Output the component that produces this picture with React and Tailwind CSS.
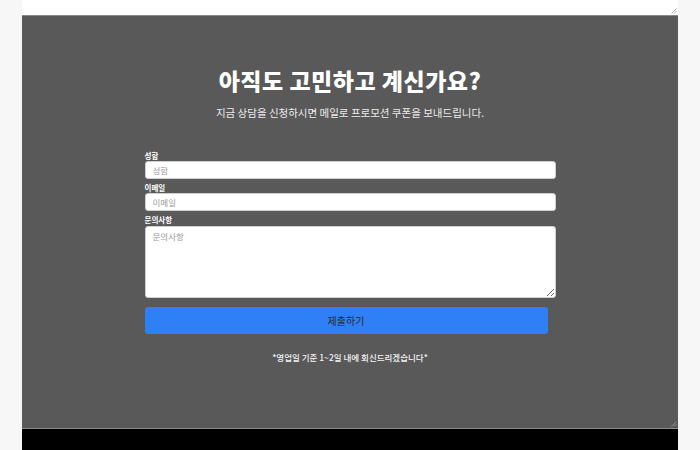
import React from "react";

const font = { fontFamily: '"Noto Sans CJK KR", "Noto Sans", sans-serif' };

function Grip({ className }) {
  return (
    <svg className={className} width="6" height="6" viewBox="0 0 6 6">
      <path d="M5.5 0.5 L0.5 5.5 M5.5 3 L3 5.5" stroke="#9a9a9a" strokeWidth="0.8" fill="none" />
    </svg>
  );
}

export default function App() {
  return (
    <div className="w-[700px] h-[450px] bg-[#f7f7f8] overflow-hidden flex justify-center" style={font}>
      <div className="w-[656px] flex flex-col">
        <div className="relative h-[15px] bg-white">
          <Grip className="absolute right-[1px] bottom-[1px]" />
        </div>
        <div className="relative h-[414px] bg-[#595959] border-t border-b border-[#8a8a8a] flex flex-col items-center">
          <h1 className="mt-[49px] text-[23px] leading-[30px] font-black text-white tracking-[0.5px]">아직도 고민하고 계신가요?</h1>
          <p className="mt-[10px] text-[10.5px] leading-[16px] text-[#ececec]">지금 상담을 신청하시면 메일로 프로모션 쿠폰을 보내드립니다.</p>
          <form className="mt-[30px] w-[411px] flex flex-col">
            <label className="text-[7.5px] leading-[10px] font-bold text-white">성함</label>
            <input
              placeholder="성함"
              className="h-[18px] w-full rounded-[3px] bg-white px-[7px] text-[8.5px] text-[#333] placeholder:text-[#999] border border-[#cfcfcf] outline-none"
            />
            <label className="mt-[4px] text-[7.5px] leading-[10px] font-bold text-white">이메일</label>
            <input
              placeholder="이메일"
              className="h-[18px] w-full rounded-[3px] bg-white px-[7px] text-[8.5px] text-[#333] placeholder:text-[#999] border border-[#cfcfcf] outline-none"
            />
            <label className="mt-[4px] text-[7.5px] leading-[10px] font-bold text-white">문의사항</label>
            <textarea
              placeholder="문의사항"
              className="mt-[1px] h-[72px] w-full rounded-[3px] bg-white px-[7px] py-[3px] text-[8.5px] leading-[12px] text-[#333] placeholder:text-[#999] border border-[#cfcfcf] outline-none resize"
            />
            <button
              type="button"
              className="mt-[9px] h-[27px] w-[403px] rounded-[3px] bg-[#2f7ff7] text-[10px] text-[#2a2a2a]"
            >
              제출하기
            </button>
          </form>
          <p className="mt-[17px] text-[8.5px] leading-[12px] font-medium text-[#f4f4f4]">*영업일 기준 1~2일 내에 회신드리겠습니다*</p>
          <Grip className="absolute right-[1px] bottom-[1px]" />
        </div>
        <div className="flex-1 bg-black" />
      </div>
    </div>
  );
}
